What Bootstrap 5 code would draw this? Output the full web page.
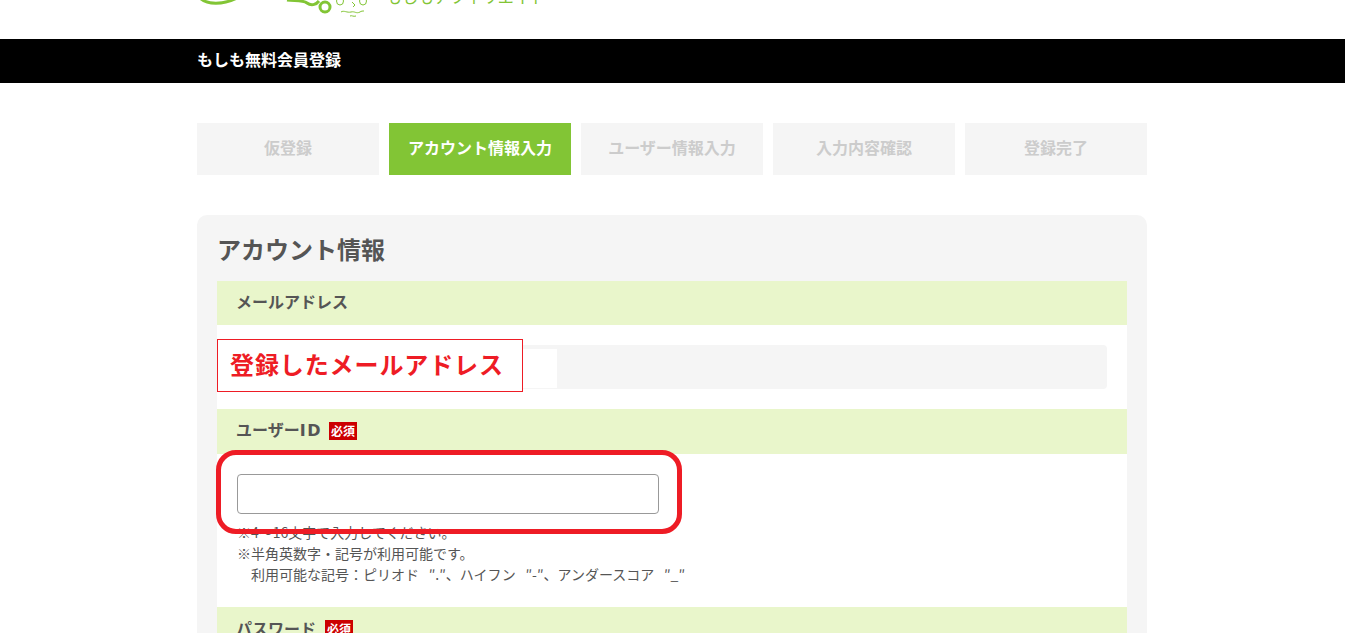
<!DOCTYPE html>
<html lang="ja"><head><meta charset="utf-8">
<link href="https://cdn.jsdelivr.net/npm/bootstrap@5.3.0/dist/css/bootstrap.min.css" rel="stylesheet">
<style>
html,body{height:633px;overflow:hidden;}
body{font-family:"Noto Sans CJK JP","Liberation Sans",sans-serif;color:#555;background:#fff;}
.wrap-950{width:950px;margin-left:197px;}
.top-logo{height:39px;overflow:hidden;}
.logo-inner{height:39px;position:relative;}
.logo-svg{display:block;}
.logo-txt{position:absolute;left:189px;top:-15px;font-size:16px;line-height:22px;color:#82c535;white-space:nowrap;}
.black-bar{background:#000;height:44px;color:#fff;font-size:16px;font-weight:700;line-height:40px;}
.steps{margin-top:40px;gap:10px;}
.step{width:182px;height:52px;background:#f5f5f5;color:#ccc;font-size:16px;font-weight:700;padding-bottom:5px;}
.step-on{background:#82c535;color:#fff;}
.panel{margin-top:40px;background:#f5f5f5;border-radius:10px 10px 0 0;padding:20px 20px 0;height:500px;}
.panel-title{font-size:24px;font-weight:700;line-height:28px;margin:0 0 18px;color:#555;}
.sheet{background:#fff;}
.sec-head{background:#e9f6cb;font-size:16px;font-weight:700;padding:0 19px 5px;color:#555;}
.h44{height:44px;}
.h45{height:45px;padding-bottom:4px;}
.latin-id{font-family:"DejaVu Sans",sans-serif;letter-spacing:1.5px;font-size:16px;}
.req{background:#c00;color:#fff;font-size:12px;line-height:18px;height:18px;width:28px;text-align:center;font-weight:700;margin:3px 0 0 7px;}
.req-pw{margin-left:9px;}
.mail-box{position:relative;padding:20px;height:84px;}
.mail-fill{height:44px;background:#f5f5f5;border-radius:4px;padding-top:4px;}
.mail-inner{width:320px;height:39px;background:#fff;}
.callout{position:absolute;left:0;top:14px;width:306px;height:53px;background:#fff;border:1px solid #ee1c25;color:#ee1c25;font-size:24px;font-weight:700;line-height:48px;padding-left:12px;letter-spacing:.9px;white-space:nowrap;}
.id-box{position:relative;padding:20px 20px 0;height:153px;}
.id-input{width:422px;height:40px;border:1px solid #999;border-radius:4px;background:#fff;display:block;}
.note{margin-top:8px;font-size:14px;line-height:21px;color:#555;white-space:nowrap;}
.note-in{padding-left:14px;}
.qt{margin-left:6.5px;}
.red-ring{position:absolute;left:-1px;top:-4px;width:466px;height:84px;border:5px solid #ee1c25;border-radius:20px;pointer-events:none;}
</style></head><body>
<div class="top-logo"><div class="wrap-950 logo-inner">
<svg class="logo-svg" width="190" height="20" viewBox="0 0 190 20" fill="none" stroke="#82c535" stroke-width="3"><path d="M3-2C10 5 26 5 40-2"/><path d="M90 0C98 1 106 0 110 3c4 3 9 2 12-2"/><circle cx="128" cy="7" r="5"/><g stroke-width="1"><ellipse cx="143" cy="1" rx="3.5" ry="4"/><ellipse cx="166" cy="1" rx="3.5" ry="4"/><path d="M155 2l3 3-2 2M144 12c3-2 6 1 10 0s5 2 9 0c1-1 3-1 4-1M153 16c2-1 3 1 6 0"/></g></svg>
<div class="logo-txt">もしもアフィリエイト</div>
</div></div>
<div class="black-bar"><div class="wrap-950">もしも無料会員登録</div></div>
<div class="wrap-950">
<div class="d-flex steps">
<div class="step d-flex align-items-center justify-content-center">仮登録</div>
<div class="step step-on d-flex align-items-center justify-content-center">アカウント情報入力</div>
<div class="step d-flex align-items-center justify-content-center">ユーザー情報入力</div>
<div class="step d-flex align-items-center justify-content-center">入力内容確認</div>
<div class="step d-flex align-items-center justify-content-center">登録完了</div>
</div>
<div class="panel">
<h2 class="panel-title">アカウント情報</h2>
<div class="sheet">
<div class="sec-head h44 d-flex align-items-center">メールアドレス</div>
<div class="mail-box"><div class="mail-fill"><div class="mail-inner"></div></div><div class="callout">登録したメールアドレス</div></div>
<div class="sec-head h45 d-flex align-items-center"><span>ユーザー<span class="latin-id">ID</span></span><span class="req">必須</span></div>
<div class="id-box">
<input class="id-input" type="text" aria-label="ユーザーID">
<div class="note">※4～16文字で入力してください。<br>※半角英数字・記号が利用可能です。<br><span class="note-in">利用可能な記号：ピリオド <span class="qt">″.″、</span>ハイフン <span class="qt">″-″、</span>アンダースコア <span class="qt">″_″</span></span></div>
<div class="red-ring"></div>
</div>
<div class="sec-head h45 d-flex align-items-center">パスワード<span class="req req-pw">必須</span></div>
</div>
</div>
</div>
<script src="https://cdn.jsdelivr.net/npm/bootstrap@5.3.0/dist/js/bootstrap.bundle.min.js"></script>
</body></html>
